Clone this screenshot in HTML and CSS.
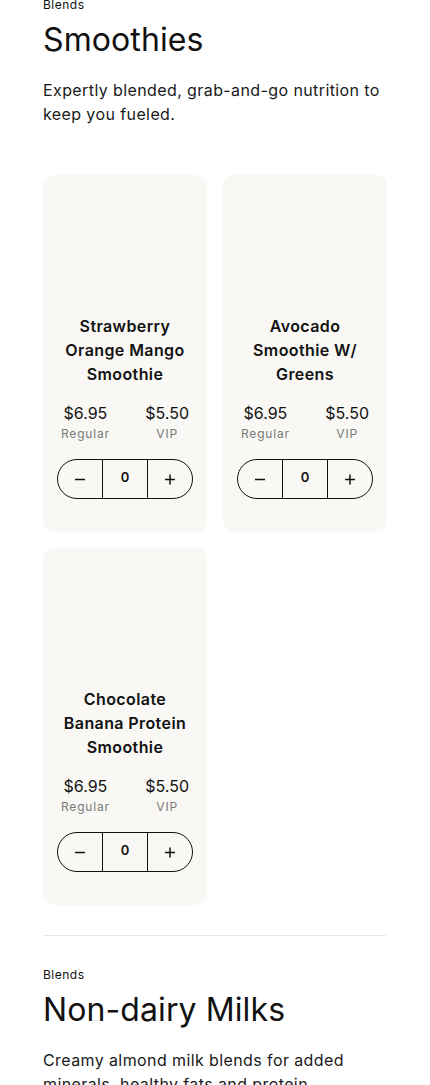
FILE: index.html
```html
<!DOCTYPE html>
<html lang="en">
<head>
    <meta charset="UTF-8">
    <meta name="viewport" content="width=device-width, initial-scale=1.0">
    <title>Blends</title>
    <link rel="stylesheet" href="styles.css">
</head>
<body>

    <div class="page">
        <section class="category">
            <div class="category-label">Blends</div>
            <h2 class="category-title">Smoothies</h2>
            <p class="category-desc">Expertly blended, grab-and-go nutrition to keep you fueled.</p>

            <div class="product-grid">
                <div class="product-card">
                    <div class="product-image"></div>
                    <h3 class="product-name">Strawberry Orange Mango Smoothie</h3>
                    <div class="price-row">
                        <div class="price"><span class="amount">$6.95</span><span class="tier">Regular</span></div>
                        <div class="price"><span class="amount">$5.50</span><span class="tier">VIP</span></div>
                    </div>
                    <div class="stepper">
                        <button class="step-btn" type="button" aria-label="Remove">
                            <svg width="12" height="12" viewBox="0 0 12 12"><path d="M1 6.5h10" stroke="#111" stroke-width="1.5"/></svg>
                        </button>
                        <span class="qty">0</span>
                        <button class="step-btn" type="button" aria-label="Add">
                            <svg width="12" height="12" viewBox="0 0 12 12"><path d="M1 6.5h10M6 1.5v10" stroke="#111" stroke-width="1.5"/></svg>
                        </button>
                    </div>
                </div>

                <div class="product-card">
                    <div class="product-image"></div>
                    <h3 class="product-name">Avocado Smoothie W/ Greens</h3>
                    <div class="price-row">
                        <div class="price"><span class="amount">$6.95</span><span class="tier">Regular</span></div>
                        <div class="price"><span class="amount">$5.50</span><span class="tier">VIP</span></div>
                    </div>
                    <div class="stepper">
                        <button class="step-btn" type="button" aria-label="Remove">
                            <svg width="12" height="12" viewBox="0 0 12 12"><path d="M1 6.5h10" stroke="#111" stroke-width="1.5"/></svg>
                        </button>
                        <span class="qty">0</span>
                        <button class="step-btn" type="button" aria-label="Add">
                            <svg width="12" height="12" viewBox="0 0 12 12"><path d="M1 6.5h10M6 1.5v10" stroke="#111" stroke-width="1.5"/></svg>
                        </button>
                    </div>
                </div>

                <div class="product-card">
                    <div class="product-image"></div>
                    <h3 class="product-name">Chocolate Banana Protein Smoothie</h3>
                    <div class="price-row">
                        <div class="price"><span class="amount">$6.95</span><span class="tier">Regular</span></div>
                        <div class="price"><span class="amount">$5.50</span><span class="tier">VIP</span></div>
                    </div>
                    <div class="stepper">
                        <button class="step-btn" type="button" aria-label="Remove">
                            <svg width="12" height="12" viewBox="0 0 12 12"><path d="M1 6.5h10" stroke="#111" stroke-width="1.5"/></svg>
                        </button>
                        <span class="qty">0</span>
                        <button class="step-btn" type="button" aria-label="Add">
                            <svg width="12" height="12" viewBox="0 0 12 12"><path d="M1 6.5h10M6 1.5v10" stroke="#111" stroke-width="1.5"/></svg>
                        </button>
                    </div>
                </div>
            </div>
        </section>

        <section class="category divided">
            <div class="category-label">Blends</div>
            <h2 class="category-title">Non-dairy Milks</h2>
            <p class="category-desc">Creamy almond milk blends for added minerals, healthy fats and protein.</p>
        </section>
    </div>

</body>
</html>
```

FILE: styles.css
```css
body {
    margin: 0;
    padding: 0;
    background-color: #FFFFFF;
    color: #111111;
    font-family: Inter, 'Noto Sans', sans-serif;
}
.page {
    padding: 0 44px 0 43px;
    margin-top: -4px;
}
.category-label {
    font-size: 12px;
    line-height: 18px;
    letter-spacing: 0.5px;
}
.category-title {
    margin: 6px 0 0;
    font-size: 32px;
    line-height: 40px;
    font-weight: 400;
    letter-spacing: 0.1px;
}
.category-desc {
    margin: 18px 0 0;
    font-size: 16px;
    line-height: 24px;
    letter-spacing: 0.4px;
    color: #1A1A1A;
}
.product-grid {
    display: grid;
    grid-template-columns: 1fr 1fr;
    gap: 16px;
    margin-top: 49px;
}
.product-card {
    background-color: #F9F8F5;
    border-radius: 10px;
    padding: 24px 14px 33px;
    display: flex;
    flex-direction: column;
    align-items: center;
}
.product-image {
    height: 115px;
    width: 100%;
}
.product-name {
    margin: 0;
    font-size: 16px;
    line-height: 24px;
    font-weight: 600;
    text-align: center;
    letter-spacing: 0.4px;
    padding: 0 4px;
}
.price-row {
    display: flex;
    justify-content: space-between;
    width: 100%;
    box-sizing: border-box;
    padding: 0 4px;
    margin-top: 16px;
}
.price {
    display: flex;
    flex-direction: column;
    align-items: center;
}
.amount {
    font-size: 16px;
    line-height: 22px;
}
.tier {
    margin-top: 2px;
    font-size: 12px;
    line-height: 16px;
    letter-spacing: 0.8px;
    color: #7A7A7A;
}
.stepper {
    display: flex;
    margin-top: 17px;
    border: 1px solid #111111;
    border-radius: 20px;
    height: 38px;
    width: 134px;
}
.step-btn {
    width: 44px;
    border: none;
    background: none;
    padding: 0;
    display: flex;
    align-items: center;
    justify-content: center;
    cursor: pointer;
}
.qty {
    width: 46px;
    border-left: 1px solid #111111;
    border-right: 1px solid #111111;
    display: flex;
    align-items: center;
    justify-content: center;
    font-size: 13px;
    font-weight: 600;
    padding-bottom: 4px;
    box-sizing: border-box;
}
.divided {
    margin-top: 30px;
    border-top: 1px solid #E6E6E6;
    padding-top: 30px;
}
```
